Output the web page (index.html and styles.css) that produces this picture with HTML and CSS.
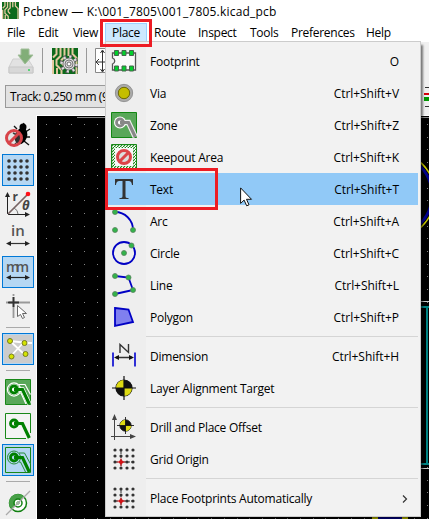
FILE: index.html
```html
<!DOCTYPE html>
<html lang="en">
<head>
<meta charset="utf-8">
<title>Pcbnew</title>
<link rel="stylesheet" href="styles.css">
</head>
<body>
<svg width="0" height="0" class="defs">
  <defs>
    <symbol id="pcb" viewBox="0 0 26 26">
      <path fill="#0c6a1c" d="M0 0h26v26H0z"/>
      <path fill="none" stroke="#e3c9a0" stroke-width="2" d="M4.500 0v6L1 9.500M8.500 0v8l-4 4v5l5 5v4M12.500 0v9l-3 3v3l3 3M16.500 0v8M20.500 0v6l4 4v16M1 12v14M5 20v6"/>
    </symbol>
    <symbol id="target" viewBox="-12 -12 24 24">
      <circle r="8" fill="#111" stroke="#111" stroke-width="1.2"/>
      <path fill="#dedb13" d="M0 0V-8A8 8 0 0 0-8 0zM0 0V8A8 8 0 0 0 8 0z"/>
      <path stroke="#111" stroke-width="1.2" d="M-12 0H12M0-12V12"/>
    </symbol>
    <symbol id="origin" viewBox="0 0 24 24">
      <path stroke="#333" stroke-width="3.2" stroke-linecap="round" stroke-dasharray="0 6" d="M3 3h18.1M3 9h18.1M3 15h18.1M3 21h18.1"/>
      <path stroke="#333" stroke-dasharray="3 1" d="M9 4v17M3 15h18"/>
      <path fill="#d51317" d="M9 10.500l1 3.500 4 1-4 1-1 4-1-4-4-1 4-1z"/><circle cx="9" cy="15" r="2" fill="#d51317"/>
    </symbol>
    <symbol id="track" viewBox="0 0 26 26">
      <path fill="none" stroke="currentColor" stroke-width="3.2" d="M9 10.500h8.500L24.300 25"/>
      <circle cx="9" cy="10.500" r="3.500" fill="none" stroke="currentColor" stroke-width="2.8"/>
    </symbol>
  </defs>
</svg>
<div class="window">
  <header class="titlebar">
    <svg class="app-icon" width="17" height="17"><use href="#pcb"/></svg>
    <span class="title">Pcbnew — K:\001_7805\001_7805.kicad_pcb</span>
  </header>
  <nav class="menubar">
    <span>File</span><span>Edit</span><span>View</span><span class="open">Place</span><span>Route</span><span>Inspect</span><span>Tools</span><span>Preferences</span><span>Help</span>
  </nav>
  <div class="toolbar">
    <svg width="26" height="26" viewBox="0 0 26 26"><path d="M5 11h15l5 8v6H1v-6z" fill="#e2e2e2" stroke="#cfcfcf"/><path d="M1 19h24v6H1z" fill="#d8d8d8" stroke="#c7c7c7"/><path d="M13 1h8v6h4l-8 9-7-9h3z" fill="#82ae78" stroke="#a2be9b"/><path d="M20 22h2" stroke="#5bd278" stroke-width="2"/></svg>
    <i class="vsep"></i>
    <svg width="26" height="26" viewBox="0 0 26 26"><use href="#pcb" width="26" height="26"/><g fill="none"><circle cx="17" cy="16" r="7.500" stroke="#555" stroke-width="4" stroke-dasharray="3 2.900"/><circle cx="17" cy="16" r="7" stroke="#ddd" stroke-width="3.500" stroke-dasharray="2 3.500"/><circle cx="17" cy="16" r="6" fill="#ddd" stroke="#666" stroke-width=".8"/><circle cx="17" cy="16" r="4" stroke="#777"/><circle cx="17" cy="16" r="2" fill="#fff" stroke="#666"/></g></svg>
    <i class="vsep"></i>
    <svg width="24" height="26" viewBox="0 0 24 26"><path d="M.5.5h23v24H.5z" fill="#fff" stroke="#888"/><path d="M7.500 3v20M1 14h22M5.500 5l2-3 2 3M5.500 21l2 3 2-3M4 11l-3 3 3 3" fill="none" stroke="#333"/></svg>
  </div>
  <div class="options"><div class="select">Track: 0.250 mm (9</div>
    <svg width="5" height="22" viewBox="0 0 5 22"><path stroke="#333" d="M1 1.500h4M1 20.500h4"/><path fill="#d8000c" d="M0 7h5v2H0z"/><path fill="#009600" d="M0 11h5v4H0z"/></svg>
  </div>
  <div class="main">
    <aside class="tools">
      <div class="tool bug"><svg width="28" height="28" viewBox="0 0 28 28"><g stroke="#111" stroke-width="1.400" fill="none"><path d="M10 5l3 3M20 2l-3 5M9 12l4 2M20 12l6-4M21 16h5M20 20l5 4M12 22l-2 3"/></g><ellipse cx="17" cy="15" rx="6" ry="8.500" transform="rotate(20 17 15)"/><circle cx="19" cy="6" r="3.500"/><circle cx="10" cy="17" r="7.500" fill="#bbb" fill-opacity=".25" stroke="#d84349" stroke-width="3"/><path d="M5 22L15 12" stroke="#d84349" stroke-width="3"/></svg></div>
      <div class="tool on"><svg width="24" height="24" viewBox="0 0 24 24"><path stroke="#333" stroke-width="3.600" stroke-linecap="round" stroke-dasharray="0 6" d="M3 3h18.100M3 9h18.100M3 15h18.100M3 21h18.100"/></svg></div>
      <div class="tool polar"><svg width="28" height="28" viewBox="0 0 28 28"><path d="M4 24.500h19M3.500 24V4" stroke="#222" fill="none"/><path fill="#222" d="M1 7l2.500-5L6 7zM21 22l5 2.500-5 2.500z"/><path d="M4 24L24 4" stroke="#776464" stroke-width="1.700"/><path d="M10 18q4 2 4 6" stroke="#777" fill="none"/><circle cx="24" cy="4" r="2.300" fill="#ff1018"/><text x="8.500" y="11" class="glyph">r</text><text x="18" y="20" class="glyph theta">θ</text></svg></div>
      <div class="tool inch"><svg width="26" height="26" viewBox="0 0 26 26"><text x="6" y="12.500" class="unit">in</text><path d="M4 20.500h18" stroke="#333" stroke-width="1.200"/><path fill="#222" d="M1 20.500l5-2.500v5zM25 20.500l-5-2.500v5z"/></svg></div>
      <div class="tool on"><svg width="26" height="26" viewBox="0 0 26 26"><text x="1" y="13" class="unit mm" textLength="23">mm</text><path d="M4 18.500h18" stroke="#222" stroke-width="1.200"/><path fill="#222" d="M1 18.500l5-2.500v5zM25 18.500l-5-2.500v5z"/></svg></div>
      <div class="tool cross"><svg width="26" height="26" viewBox="0 0 26 26"><path d="M8.500 1v24M1 9.500h24" stroke="#999" stroke-width="1.800" stroke-dasharray="2 1 20 0"/><path d="M8.500 4v10M3 9.500h11" stroke="#333" stroke-width="1.800"/><path d="M12.500 12.500v11l3-2 2 4 2-1-2-4h4z" fill="#fff" stroke="#666"/></svg></div>
      <i class="hsep"></i>
      <div class="tool on rats"><svg width="28" height="28" viewBox="0 0 28 28"><path fill="#ccc" d="M0 0h28v28H0z"/><path d="M6 6l18 2h4M5 5l16 15M20 7L7 21" fill="none" stroke="#fff" stroke-width="1.800"/><g fill="#d4e400" stroke="#777b22"><circle cx="6" cy="6" r="2.500"/><circle cx="20.500" cy="8" r="2.500"/><circle cx="7.500" cy="21.500" r="2.500"/><circle cx="21.500" cy="19" r="2.500"/></g></svg></div>
      <i class="hsep"></i>
      <div class="tool z1"><svg class="green" width="26" height="26" viewBox="0 0 26 26"><path d="M.5.5h25v25H.5z" fill="#59a759" stroke="#188818"/><circle cx="9" cy="10.500" r="6.600" fill="none" stroke="#fff" stroke-width="1.200"/><path d="M14 5.500h6l5.500 10M14.500 14h1.500l5 11" fill="none" stroke="#fff" stroke-width="1.200"/><path d="M9 10.500h8.500L24.300 25" fill="none" stroke="#fff" stroke-width="4.500"/><circle cx="9" cy="10.500" r="5.400" fill="#fff"/><use href="#track"/></svg></div>
      <div class="tool z2"><svg class="green" width="26" height="26" viewBox="0 0 26 26"><path d="M21 25.500H.5V.5h25V20" fill="#f4f4f4" stroke="#188818"/><use href="#track"/></svg></div>
      <div class="tool on z3"><svg class="green" width="26" height="26" viewBox="0 0 26 26"><path d="M.5.5h25v25H.5z" fill="none" stroke="#188818"/><circle cx="9" cy="10.500" r="6.500" fill="none" stroke="#268d39"/><path d="M14 6h5.500l6 11M14 15h1.500l5 10" fill="none" stroke="#268d39"/><use href="#track"/></svg></div>
      <i class="hsep"></i>
      <div class="tool ring"><svg width="26" height="26" viewBox="0 0 26 26"><circle cx="13" cy="13" r="8.500" fill="#fff" stroke="#118011" stroke-width="1.500"/><path fill="#48a048" d="M6.500 19A8.500 8.500 0 0 1 19 6.500z"/><circle cx="13" cy="13" r="4" fill="#fff" stroke="#118011" stroke-width="1.500"/><circle cx="13" cy="13" r="1.300" fill="none" stroke="#6a6"/><path d="M1 25L25 1" stroke="#aaa" stroke-width="1.300"/></svg></div>
    </aside>
    <svg class="board" width="393" height="404" viewBox="36 115 393 404">
      <path fill="#fff" d="M36 115h393v404H36z"/>
      <path fill="#000" d="M37 116h392v403H37z"/>
      <path d="M77 117.500h352" stroke="#888"/>
      <g id="dots" fill="#848484"></g>
      <g fill="none"><circle cx="391" cy="195" r="44" stroke="#c9c900" stroke-width="1.500"/><circle cx="391" cy="195" r="41" stroke="#00008c" stroke-width="3"/><path d="M421 301.500h8M421 468.500h8" stroke="#ccc"/><path d="M421 307h8M421 464h8M427 306v159" stroke="#008484" stroke-width="2"/><path d="M372 518h36" stroke="#c9c900" stroke-width="2"/><path d="M378 518h24" stroke="#00008c" stroke-width="2"/></g>
    </svg>
  </div>

  <div class="menu">
    <div class="item"><svg viewBox="0 0 26 26"><path d="M3 5H1.500v5c3 1 3 5 0 6v6H24.500V5z" fill="#fafafa" stroke="#555" stroke-width="1.300"/><path fill="#00cf2b" stroke="#44674b" d="M3.500 2.500h4v5h-4zM11 2.500h4v5h-4zM18.500 2.500h4v5h-4zM3.500 18h4v5h-4zM11 18h4v5h-4zM18.500 18h4v5h-4z"/></svg><span>Footprint</span><kbd>O</kbd></div>
    <div class="item"><svg viewBox="0 0 26 26"><circle cx="13" cy="13" r="7.500" fill="#c4be00" stroke="#aaa" stroke-width="3"/><circle cx="13" cy="13" r="5.700" fill="#c4be00" stroke="#6b6710"/><circle cx="13" cy="13" r="8.700" fill="none" stroke="#777" stroke-width=".5"/></svg><span>Via</span><kbd>Ctrl+Shift+V</kbd></div>
    <div class="item"><svg viewBox="0 0 26 26"><path d="M.5.5h25v25H.5z" fill="#59a759" stroke="#138713"/><path d="M9 10.500h8.500L24.300 25" fill="none" stroke="#eee" stroke-width="5.500"/><circle cx="9" cy="10.500" r="6" fill="#fff"/><use class="gray" href="#track"/></svg><span>Zone</span><kbd>Ctrl+Shift+Z</kbd></div>
    <div class="item"><svg viewBox="0 0 26 26"><defs><pattern id="hatch" width="3" height="3" patternUnits="userSpaceOnUse"><path d="M0 3L3 0" stroke="#168716" stroke-width="1.200"/></pattern></defs><path d="M.5.5h25v25H.5z" fill="#fff"/><path d="M.5.5h25v25H.5z" fill="url(#hatch)" stroke="#168716"/><path d="M4 4h18v18H4z" fill="#f8f8f8"/><circle cx="13" cy="13" r="6.500" fill="#ddd" stroke="#dc4448" stroke-width="3"/><path d="M8 18L18 8" stroke="#dc4448" stroke-width="3"/></svg><span>Keepout Area</span><kbd>Ctrl+Shift+K</kbd></div>
    <div class="item hot"><svg viewBox="0 0 26 26"><path fill="#333" d="M4 3h18v6h-1c-.5-3-1-4-4-4h-2.500v15c0 2 1 2 3 2v1H8.500v-1c2 0 3 0 3-2V5H9C6 5 5.500 6 5 9H4z"/></svg><span>Text</span><kbd>Ctrl+Shift+T</kbd></div>
    <div class="item"><svg viewBox="0 0 26 26"><path d="M4 4C14 4 22 12 22 22" fill="none" stroke="#0000c4" stroke-width="1.800"/><g class="nodes"><circle cx="4" cy="4" r="2.500"/><circle cx="4" cy="22" r="2.500"/><circle cx="22" cy="22" r="2.500"/></g></svg><span>Arc</span><kbd>Ctrl+Shift+A</kbd></div>
    <div class="item"><svg viewBox="0 0 26 26"><circle cx="13" cy="13" r="11" fill="none" stroke="#0000c4" stroke-width="1.800"/><g class="nodes"><circle cx="13" cy="13" r="2.500"/><circle cx="20.500" cy="5.500" r="2.500"/></g></svg><span>Circle</span><kbd>Ctrl+Shift+C</kbd></div>
    <div class="item"><svg viewBox="0 0 26 26"><path d="M4 4l13.500 1.500L22 18 4 22" fill="none" stroke="#0000c4" stroke-width="1.800"/><g class="nodes"><circle cx="4" cy="4" r="2.500"/><circle cx="17.500" cy="5.500" r="2.500"/><circle cx="22" cy="18" r="2.500"/><circle cx="4" cy="22" r="2.500"/></g></svg><span>Line</span><kbd>Ctrl+Shift+L</kbd></div>
    <div class="item"><svg viewBox="0 0 26 26"><path d="M4 4l13.500 1.500L22 18 4 22z" fill="#8080ef" stroke="#0000c4" stroke-width="1.800"/></svg><span>Polygon</span><kbd>Ctrl+Shift+P</kbd></div>
    <hr>
    <div class="item"><svg viewBox="0 0 26 26"><path d="M2 9.500v14M24 9.500v14" stroke="#0000d0" stroke-width="1.600"/><path d="M5 14.500h16M9 10V1.500l8.500 8V1" fill="none" stroke="#333" stroke-width="1.400"/><path fill="#111" d="M3 14.500l5-2.500v5zM23 14.500l-5-2.500v5z"/></svg><span>Dimension</span><kbd>Ctrl+Shift+H</kbd></div>
    <div class="item"><svg viewBox="0 0 26 26"><use href="#target" x="1" y="1" width="24" height="24"/></svg><span>Layer Alignment Target</span></div>
    <hr>
    <div class="item"><svg viewBox="0 0 26 26"><path d="M0 22.500h21M3.500 26V4" stroke="#444"/><path fill="#444" d="M1 6l2.500-6L6 6zM19 20l6 2.500-6 2.500z"/><use href="#target" x="6" y="3" width="17" height="17"/></svg><span>Drill and Place Offset</span></div>
    <div class="item"><svg viewBox="0 0 26 26"><use href="#origin" x="1" y="1" width="24" height="24"/></svg><span>Grid Origin</span></div>
    <hr>
    <div class="item"><svg viewBox="0 0 26 26"><use href="#origin" x="1" y="1" width="24" height="24"/></svg><span>Place Footprints Automatically</span><svg class="chev" viewBox="0 0 6 8"><path d="M1 .5L4.500 4 1 7.500" fill="none" stroke="#333" stroke-width="1.200"/></svg></div>
  </div>
  <div class="mark mark-place"></div>
  <div class="mark mark-text"></div>
  <svg class="pointer" width="13" height="20" viewBox="0 0 13 20"><path d="M.6.9v15.500l3.500-3.300 2.600 5.700 2.300-1-2.500-5.500h5z" fill="#fff" stroke="#111"/></svg>
</div>
<script src="board.js"></script>
</body>
</html>
```
FILE: styles.css
```css
* { box-sizing: border-box; }
body { margin: 0; overflow: hidden; font: 12px/16px "Open Sans", "Noto Sans", sans-serif; color: #000; }
svg { display: block; flex: none; }
.defs { position: absolute; }
.window { position: relative; width: 429px; height: 519px; background: #f0f0f0; display: flex; flex-direction: column; overflow: hidden; }
.titlebar { height: 23px; background: #fff; display: flex; align-items: center; padding: 1px 0 0 2px; gap: 4px; white-space: nowrap; letter-spacing: .2px; }
.app-icon { margin-top: -3px; }
.menubar { height: 19px; background: #fff; display: grid; grid-template-columns: 31px 35px 39px 42px 44px 52px 41px 75px 1fr; line-height: 20px; }
.menubar span { padding-left: 7px; white-space: nowrap; letter-spacing: -.28px; }
.menubar .open { background: #cce8ff; border: 1px solid #99d1ff; padding-left: 6px; line-height: 18px; }
.toolbar { height: 42px; display: flex; align-items: flex-start; padding: 6px 0 0 8px; }
.vsep { width: 1px; height: 25px; background: #999; margin: 0 9px 0 8px; }
.vsep + svg[width="24"] { margin-left: -1px; }
.options { height: 31px; display: flex; padding-top: 1px; justify-content: space-between; }
.select { margin-left: 5px; width: 110px; height: 23px; border: 1px solid #999; background: #e2e2e2; padding-left: 4px; line-height: 22px; letter-spacing: -.42px; white-space: nowrap; overflow: hidden; }
.options svg { margin-top: 1px; }
.main { display: flex; height: 404px; }
.tools { width: 36px; padding: 4px 0 0 2px; flex: none; }
.tool { width: 32px; height: 32px; display: flex; align-items: center; justify-content: center; border: 1px solid transparent; }
.tool svg { overflow: visible; }
.on { background: #b5d7f3; border-color: #0078d7; }
.bug { margin-bottom: 3px; }
.polar { margin-top: 2px; }
.cross { margin-top: 2px; }
.inch { margin-bottom: 4px; }
.hsep { display: block; width: 24px; height: 1px; background: #aaa; margin: 5px 0 5px 4px; }
.z2, .z3 { margin-top: 2px; }
.green { color: #008000; }
.gray { color: #888; }
.glyph { font: bold 12px "Open Sans", sans-serif; fill: #444; }
.theta { font-style: italic; font-size: 13px; }
.unit { font: 600 15px "Open Sans", sans-serif; fill: #555; }
.mm { font-size: 14px; }
.nodes { fill: #32b44a; stroke: #59805d; stroke-width: .8px; }
.menu { position: absolute; left: 105px; top: 41px; width: 316px; height: 476px; background: linear-gradient(90deg, #eee 40px, #f2f2f2 40px); border: 1px solid #ccc; padding: 3px 2px; box-shadow: 3px 3px 2px -1px rgba(0,0,0,.5); }
.item { height: 32px; display: flex; align-items: center; padding: 1px 19px 0 3px; white-space: nowrap; letter-spacing: -.24px; }
.item > svg { width: 26px; height: 26px; margin: -1px 13px 0 0; }
.item > span { flex: 1; }
.item kbd { font: inherit; letter-spacing: -.05px; }
.hot { background: #91c9f7; }
.item > svg.chev { width: 6px; height: 8px; margin: 0 -9px 0 0; }
.menu hr { border: 0; height: 1px; background: #d5d5d5; margin: 3px 0 3px 38px; }
.mark { position: absolute; border: 3px solid #ed1c24; }
.mark-place { left: 100px; top: 19px; width: 52px; height: 28px; }
.mark-text { left: 105px; top: 168px; width: 113px; height: 42px; }
.pointer { position: absolute; left: 240px; top: 187px; }
```
FILE: board.js
```js
const dots = document.getElementById("dots");
for (let row = 0; row < 32; row++) {
  for (let col = 0; col < 31; col++) {
    const r = document.createElementNS("http://www.w3.org/2000/svg", "rect");
    r.setAttribute("x", Math.round(46 + col * 12.7));
    r.setAttribute("y", Math.round(124 + row * 12.7));
    r.setAttribute("width", 1);
    r.setAttribute("height", 1);
    dots.appendChild(r);
  }
}
```
